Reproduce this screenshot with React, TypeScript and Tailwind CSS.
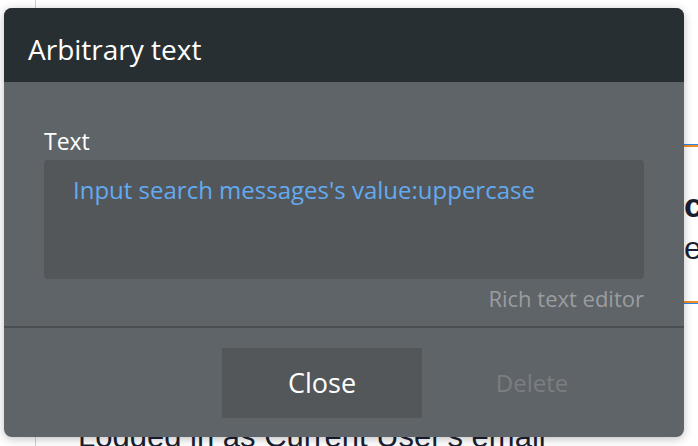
import React from "react";

const Dialog: React.FC = () => {
  return (
    <div className="absolute left-[4px] top-[8px] flex h-[429px] w-[680px] flex-col overflow-hidden rounded-lg bg-[#5f6468] font-['Open_Sans',sans-serif] shadow-[0_2px_10px_rgba(0,0,0,0.25)]">
      <div className="h-[74px] shrink-0 bg-[#282f32] px-[24px] pt-[22px]">
        <h2 className="text-[28px] leading-[38px] text-white">Arbitrary text</h2>
      </div>

      <div className="flex flex-col px-[40px] pt-[44px]">
        <label className="mb-[4px] text-[23px] leading-[30px] text-white">Text</label>
        <div className="h-[119px] rounded-sm bg-[#53575a] px-[29px] pt-[13px]">
          <p className="text-[24px] leading-[33px] text-[#63aaf0]">
            Input search messages's value:uppercase
          </p>
        </div>
        <div className="mt-[4px] text-right text-[22px] leading-[30px] text-[#9a9da0]">
          Rich text editor
        </div>
      </div>

      <div className="mt-[13px] h-[2px] w-full bg-[#4a4e51]" />

      <div className="flex gap-[10px] pl-[218px] pt-[20px]">
        <button className="h-[70px] w-[200px] bg-[#53575a] text-[27px] text-white">
          Close
        </button>
        <button className="h-[70px] w-[200px] text-[24px] text-[#7a7e81]">Delete</button>
      </div>
    </div>
  );
};

export default function App() {
  return (
    <div className="relative h-[446px] w-[698px] overflow-hidden bg-white font-['Liberation_Sans',Arial,sans-serif]">
      <div className="ml-[35px] flex h-full flex-col border-l border-[#c6d1e8]">
        <div className="ml-[648px] mt-[144px] w-[220px] shrink-0 border-y border-[#2d8ae5]">
          <div className="h-[158px] border-y-2 border-[#f28c28] pt-[41px]">
            <p className="text-[34px] font-bold leading-none text-[#1b1f33]">co</p>
            <p className="mt-[10px] text-[32px] leading-none text-[#1b1f33]">e</p>
          </div>
        </div>
        <p className="ml-[42px] mt-[117px] shrink-0 whitespace-nowrap text-[31px] leading-none text-[#1b1f33]">
          Logged in as Current User's email
        </p>
      </div>
      <Dialog />
    </div>
  );
}
